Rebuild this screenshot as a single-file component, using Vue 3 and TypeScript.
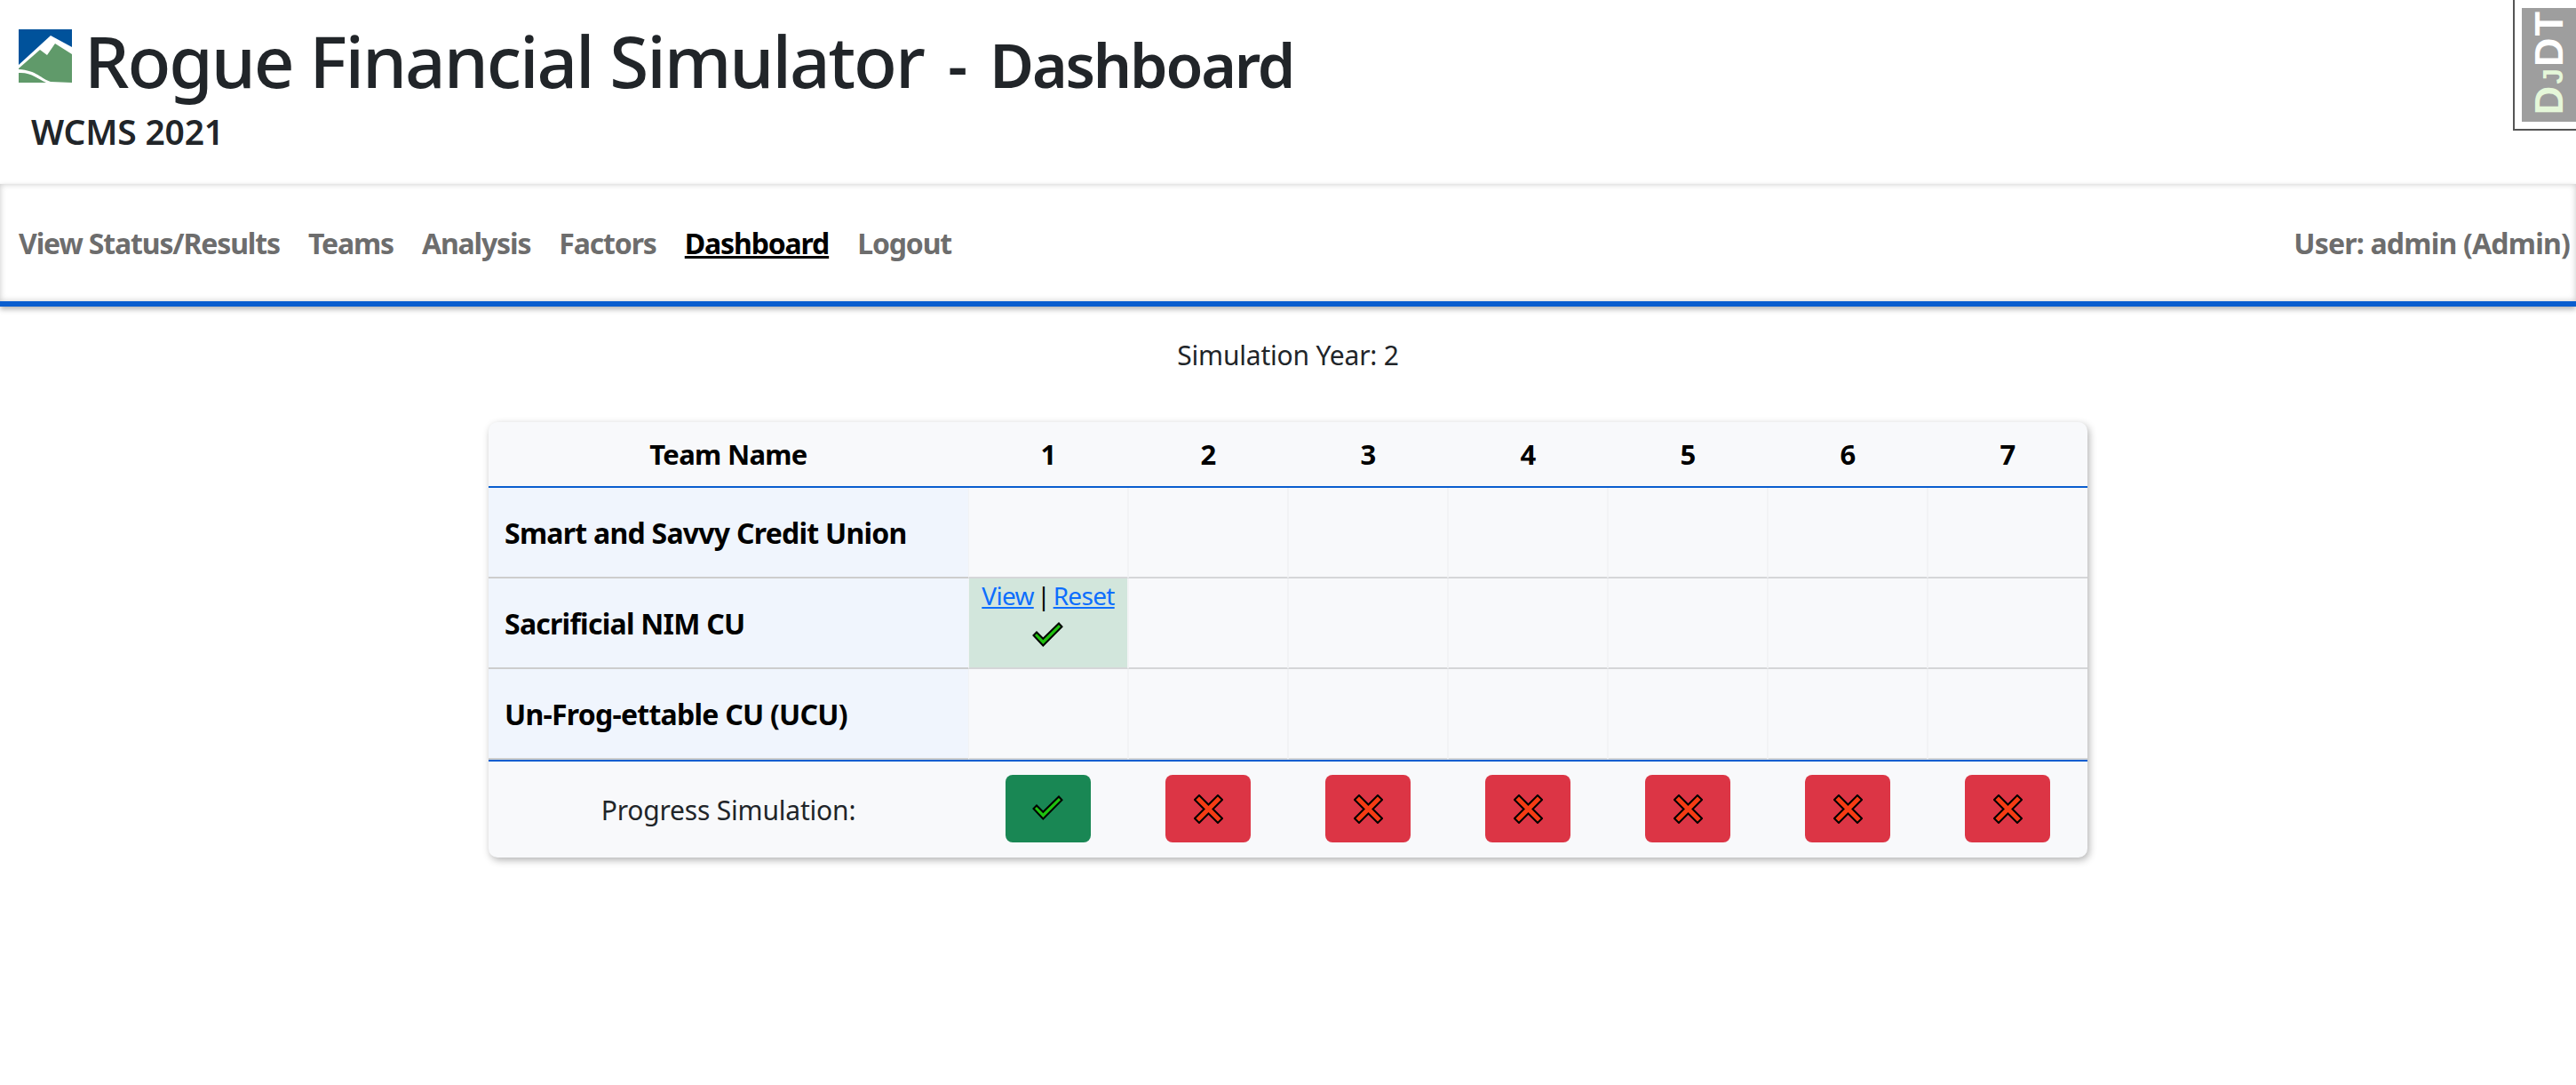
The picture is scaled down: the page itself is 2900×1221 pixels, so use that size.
<script setup lang="ts">
const navItems: { label: string; active?: boolean }[] = [
  { label: 'View Status/Results' },
  { label: 'Teams' },
  { label: 'Analysis' },
  { label: 'Factors' },
  { label: 'Dashboard', active: true },
  { label: 'Logout' },
]
const years: number[] = [1, 2, 3, 4, 5, 6, 7]
const teams: string[] = ['Smart and Savvy Credit Union', 'Sacrificial NIM CU', 'Un-Frog-ettable CU (UCU)']
</script>

<template>
  <div class="page">
    <header class="head">
      <div class="title-row">
        <svg class="logo" viewBox="0 0 60 60" aria-hidden="true">
          <rect width="60" height="60" fill="#00529b" />
          <polygon points="0,40 36,7 60,20 60,60 0,60" fill="#fff" />
          <path d="M0,44 L24,23 L32,29 L41,16 L60,28 L60,60 L36,59 C26,56 20,46 0,45 Z" fill="#609a6a" />
          <path d="M0,49 C14,48 22,56 31,60 L0,60 Z" fill="#609a6a" />
        </svg>
        <h1 class="title">Rogue Financial Simulator <span class="sub">- Dashboard</span></h1>
      </div>
      <div class="event">WCMS 2021</div>
    </header>

    <nav class="nav">
      <div class="nav-left">
        <a v-for="item in navItems" :key="item.label" class="nav-link" :class="{ active: item.active }">{{ item.label }}</a>
      </div>
      <span class="nav-link user">User: admin (Admin)</span>
    </nav>

    <p class="year">Simulation Year: 2</p>

    <div class="card">
      <table class="grid">
        <colgroup>
          <col class="c-name" />
          <col v-for="y in years" :key="y" class="c-year" />
        </colgroup>
        <thead>
          <tr>
            <th>Team Name</th>
            <th v-for="y in years" :key="y">{{ y }}</th>
          </tr>
        </thead>
        <tbody>
          <tr v-for="(team, t) in teams" :key="team">
            <td class="name">{{ team }}</td>
            <td v-for="y in years" :key="y" class="cell" :class="{ done: t === 1 && y === 1 }">
              <template v-if="t === 1 && y === 1">
                <div class="links"><a class="link">View</a> | <a class="link">Reset</a></div>
                <svg class="check" viewBox="0 0 36 30" aria-hidden="true">
                  <polygon points="30,1.5 33.5,5.3 12.3,26.5 1.5,15 5,11.5 12.3,18.8" fill="#1fc10f" stroke="#000" stroke-width="2" />
                </svg>
              </template>
            </td>
          </tr>
        </tbody>
        <tfoot>
          <tr>
            <td class="progress">Progress Simulation:</td>
            <td v-for="y in years" :key="y" class="action">
              <button class="btn" :class="y === 1 ? 'ok' : 'bad'" type="button">
                <svg v-if="y === 1" class="check" viewBox="0 0 36 30" aria-hidden="true">
                  <polygon points="30,1.5 33.5,5.3 12.3,26.5 1.5,15 5,11.5 12.3,18.8" fill="#1fc10f" stroke="#000" stroke-width="2" />
                </svg>
                <svg v-else class="cross" viewBox="0 0 33 33" aria-hidden="true">
                  <polygon points="6,1 16.5,11.5 27,1 32,6 21.5,16.5 32,27 27,32 16.5,21.5 6,32 1,27 11.5,16.5 1,6" fill="#f53c14" stroke="#000" stroke-width="2" />
                </svg>
              </button>
            </td>
          </tr>
        </tfoot>
      </table>
    </div>

    <aside class="djdt">
      <div class="djdt-box"><span class="djdt-text"><b>Dj</b>DT</span></div>
    </aside>
  </div>
</template>

<style>
html, body { margin: 0; background: #fff; }
</style>

<style scoped>
.page {
  position: relative;
  min-height: 1221px;
  font-family: "Noto Sans", "Open Sans", sans-serif;
  color: #212529;
  font-size: 30px;
  overflow: hidden;
}
.head { height: 207px; box-sizing: border-box; padding: 22px 0 0 21px; }
.title-row { display: flex; align-items: flex-start; gap: 14px; }
.logo { width: 60px; height: 60px; margin-top: 11px; flex: none; }
.title { margin: 0; font-size: 80px; font-weight: 500; line-height: 92px; letter-spacing: -2.1px; white-space: nowrap; }
.sub { font-size: 68px; font-weight: 600; letter-spacing: -2.2px; word-spacing: 12px; margin-left: 9px; }
.event { margin: 7px 0 0 14px; font-size: 39px; font-weight: 600; line-height: 44px; letter-spacing: -0.2px; }
.nav {
  height: 138px;
  box-sizing: border-box;
  padding: 0 7px 0 21px;
  display: flex;
  align-items: center;
  justify-content: space-between;
  border-bottom: 6px solid #0a5ecf;
  box-shadow: inset 0 0 7px rgba(0, 0, 0, 0.22), 0 3px 6px rgba(0, 0, 0, 0.3);
}
.nav-left { display: flex; gap: 32px; }
.nav-link { font-size: 32px; font-weight: 700; color: #6d6d6d; letter-spacing: -1.15px; white-space: nowrap; }
.nav-link.user { letter-spacing: -0.8px; }
.nav-link.active { color: #000; text-decoration: underline; }
.year { margin: 33px 0 0; text-align: center; font-size: 30px; line-height: 44px; letter-spacing: -0.2px; }
.card {
  width: 1800px;
  margin: 53px auto 0;
  border-radius: 10px;
  overflow: hidden;
  background: #f8f9fb;
  box-shadow: 2px 3px 8px rgba(0, 0, 0, 0.3);
}
.grid { width: 100%; table-layout: fixed; border-collapse: separate; border-spacing: 0; color: #000; }
.c-name { width: 540px; }
.c-year { width: 180px; }
th {
  height: 74px;
  box-sizing: border-box;
  padding: 0;
  font-size: 31px;
  font-weight: 700;
  letter-spacing: -0.7px;
  border-bottom: 2px solid #0a5ecf;
}
td { padding: 0; box-sizing: border-box; height: 102px; }
.name {
  padding-left: 18px;
  background: #f0f5fd;
  font-size: 32px;
  font-weight: 700;
  letter-spacing: -0.75px;
  border-bottom: 2px solid #cdcdcd;
  white-space: nowrap;
}
.cell {
  border-bottom: 2px solid #d5d6d8;
  border-left: 1px solid #f2f3f5;
  border-right: 1px solid #f2f3f5;
  background-clip: padding-box;
  text-align: center;
  vertical-align: top;
}
.cell:last-child { border-right: none; }
.cell.done { background: #d2e6dc; background-clip: padding-box; }
.links { font-size: 28px; line-height: 38px; letter-spacing: -0.7px; word-spacing: -3px; white-space: nowrap; }
.link { color: #0d6efd; text-decoration: underline; }
.check { width: 36px; height: 30px; display: block; margin: 11px auto 0; }
.btn .check { margin: 0; }
.cross { width: 33px; height: 33px; display: block; }
.progress {
  height: 110px;
  border-top: 2px solid #0a5ecf;
  text-align: center;
  font-size: 30px;
  letter-spacing: -0.2px;
  color: #212529;
}
.action { height: 110px; border-top: 2px solid #0a5ecf; text-align: center; padding-bottom: 2px; }
.btn {
  width: 96px;
  height: 76px;
  padding: 0;
  border: none;
  border-radius: 8px;
  display: inline-flex;
  align-items: center;
  justify-content: center;
  vertical-align: middle;
}
.ok { background: #198754; }
.bad { background: #dc3545; }
.djdt {
  position: absolute;
  top: -2px;
  right: -2px;
  width: 73px;
  height: 149px;
  box-sizing: border-box;
  border: 2px solid #555;
  background: #fff;
  padding: 9px 0 8px 8px;
}
.djdt-box {
  display: flex;
  align-items: center;
  justify-content: center;
  box-sizing: border-box;
  height: 128px;
  width: 100%;
  padding-bottom: 5px;
  background: #9e9e9e;
}
.djdt-text {
  display: block;
  color: #fff;
  font-family: "Liberation Sans", sans-serif;
  font-size: 45px;
  font-weight: 700;
  font-variant: small-caps;
  letter-spacing: 2px;
  writing-mode: vertical-rl;
  transform: rotate(180deg);
  line-height: 1;
  white-space: nowrap;
}
.djdt-text b { font-weight: 700; color: #e5f7d9; }
</style>
